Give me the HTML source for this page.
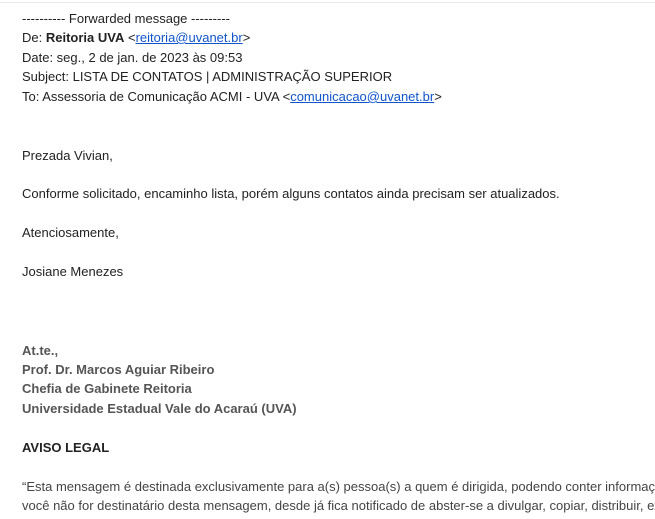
<!DOCTYPE html>
<html><head><meta charset="utf-8"><style>
html,body{margin:0;padding:0;width:655px;height:519px;overflow:hidden;background:#fff}
body{font-family:"Liberation Sans",Arial,sans-serif;font-size:13px;color:#222;position:relative}
.w{position:absolute;left:0;top:0;width:655px;height:519px;overflow:hidden}
.l{position:absolute;left:22px;white-space:nowrap;line-height:16px;max-width:633px;overflow:hidden}
a{color:#1155cc;text-decoration:underline}
.s{color:#555;font-weight:bold}
.top{position:absolute;left:0;top:2px;width:655px;height:1px;background:#e8e8e8}
</style></head><body><div class="w">
<div class="top"></div>
<div class="l" style="top:11px">---------- Forwarded message ---------</div>
<div class="l" style="top:30px">De: <b>Reitoria UVA</b> &lt;<a>reitoria@uvanet.br</a>&gt;</div>
<div class="l" style="top:50px">Date: seg., 2 de jan. de 2023 às 09:53</div>
<div class="l" style="top:69px">Subject: LISTA DE CONTATOS | ADMINISTRAÇÃO SUPERIOR</div>
<div class="l" style="top:89px">To: Assessoria de Comunicação ACMI - UVA &lt;<a>comunicacao@uvanet.br</a>&gt;</div>
<div class="l" style="top:148px">Prezada Vivian,</div>
<div class="l" style="top:186px">Conforme solicitado, encaminho lista, porém alguns contatos ainda precisam ser atualizados.</div>
<div class="l" style="top:225px">Atenciosamente,</div>
<div class="l" style="top:264px">Josiane Menezes</div>
<div class="l s" style="top:343px">At.te.,</div>
<div class="l s" style="top:362px">Prof. Dr. Marcos Aguiar Ribeiro</div>
<div class="l s" style="top:381px">Chefia de Gabinete Reitoria</div>
<div class="l s" style="top:401px">Universidade Estadual Vale do Acaraú (UVA)</div>
<div class="l" style="top:440px;font-weight:bold;color:#222">AVISO LEGAL</div>
<div class="l" style="top:479px;color:#444">“Esta mensagem é destinada exclusivamente para a(s) pessoa(s) a quem é dirigida, podendo conter informações confidenciais</div>
<div class="l" style="top:498px;color:#444">você não for destinatário desta mensagem, desde já fica notificado de abster-se a divulgar, copiar, distribuir, examinar</div>
</div></body></html>
